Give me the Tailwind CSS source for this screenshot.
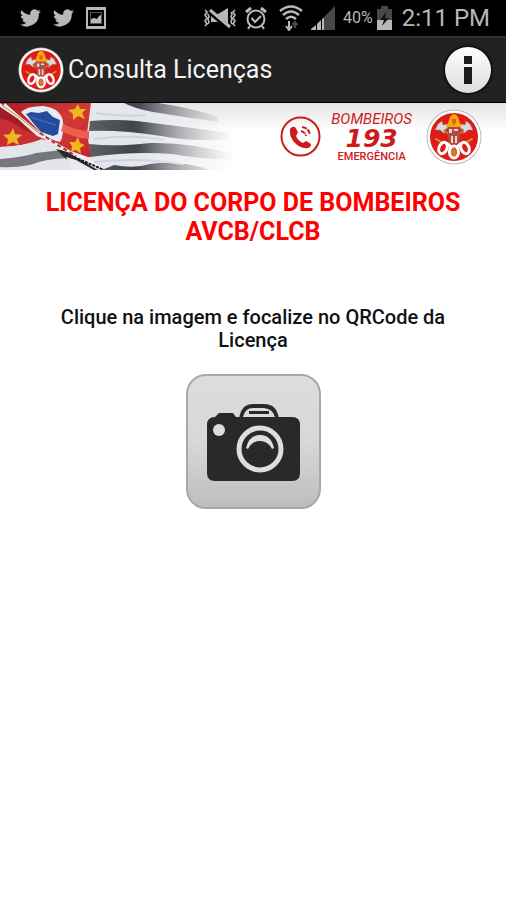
<!DOCTYPE html>
<html lang="pt-BR">
<head>
    <meta charset="UTF-8">
    <meta name="viewport" content="width=device-width, initial-scale=1.0">
    <title>Consulta Licenças</title>
    <script src="https://cdn.jsdelivr.net/npm/@tailwindcss/browser@4"></script>
</head>
<body class="min-h-screen bg-white font-['Roboto',sans-serif]">

    <!-- Símbolos reutilizados -->
    <svg class="hidden">
        <symbol id="passaro" viewBox="0 0 24 20">
            <path d="M24 2.400a10 10 0 0 1-2.800.8A5 5 0 0 0 23.300.5a10 10 0 0 1-3.100 1.200 4.900 4.900 0 0 0-8.400 4.500A14 14 0 0 1 1.700 1a4.900 4.900 0 0 0 1.500 6.600 4.900 4.900 0 0 1-2.200-.6 4.900 4.900 0 0 0 3.900 4.900 5 5 0 0 1-2.200.1 4.900 4.900 0 0 0 4.600 3.400A10 10 0 0 1 0 17.500 14 14 0 0 0 21.500 5 10 10 0 0 0 24 2.400z"/>
        </symbol>
        <symbol id="brasao" viewBox="0 0 56 56">
            <circle cx="28" cy="28" r="27.500" fill="#b9b9b9"/>
            <circle cx="28" cy="28" r="26.500" fill="#fff"/>
            <circle cx="28" cy="28" r="24" fill="#df1b16"/>
            <g stroke="#b07a2c" stroke-width="2" stroke-linecap="round">
                <path d="M16 19l20 18M40 19L20 37"/>
                <path d="M10 30l5 3 4 5M46 30l-5 3-4 5" fill="none" stroke="#c99a30"/>
            </g>
            <path d="M9 21l3-6 4-3 1 4 4-1 1 4-4 2 1 4-5-4z" fill="#dcdcdc" stroke="#8d8080" stroke-width=".6"/>
            <path d="M47 21l-3-6-4-3-1 4-4-1-1 4 4 2-1 4 5-4z" fill="#dcdcdc" stroke="#8d8080" stroke-width=".6"/>
            <path d="M24 8q4-6 8 0l2 6 2 4H20l2-4z" fill="#f5a90c"/>
            <path d="M26 10h4v4l-2 2-2-2z" fill="#dd6510"/>
            <path d="M22 18h12v10l-2 7h-8l-2-7z" fill="#b04a44"/>
            <path d="M23 20h3v4h-3zM28 20h4v2h-4zM25 27h2v7h-2zM29 27h2v7h-2z" fill="#edd5cf"/>
            <g fill="#df1b16" stroke="#fff" stroke-width="3">
                <ellipse cx="17" cy="39" rx="4" ry="6" transform="rotate(24 17 39)"/>
                <ellipse cx="39" cy="39" rx="4" ry="6" transform="rotate(-24 39 39)"/>
                <path d="M20 34l8 6 8-6" fill="none"/>
                <ellipse cx="28" cy="43" rx="4.500" ry="6"/>
            </g>
            <path d="M28 38l3 5-3 5-3-5z" fill="#c98220"/>
        </symbol>
    </svg>

    <!-- Barra de status -->
    <div class="flex h-9 items-center justify-between bg-black pr-4 pl-5 text-[#b8b8b8]">
        <div class="flex items-center gap-3">
            <svg class="h-[18px] w-[21px] fill-current"><use href="#passaro"/></svg>
            <svg class="h-[18px] w-[21px] fill-current"><use href="#passaro"/></svg>
            <svg class="h-[22px] w-5" viewBox="0 0 20 22" fill="currentColor">
                <path fill-rule="evenodd" d="M0 0h20v22H0zM2 3v16h16V3z"/>
                <path fill-rule="evenodd" d="M4 5h12v12H4zM5 6v10h10V6z" fill="#555"/>
                <path d="M5 16v-4l3-1 3 1 2-3 2-1v8z"/>
            </svg>
        </div>
        <div class="flex items-center">
            <!-- Vibrar / mudo -->
            <svg class="mr-2 h-[22px] w-[34px]" viewBox="0 0 34 22" fill="none" stroke="currentColor" stroke-width="1.600">
                <path d="M2 3l2 2-2 3 2 3-2 3 2 3-2 2M6 5l-1 2 1 3-1 2 1 3-1 2M32 3l-2 2 2 3-2 3 2 3-2 3 2 2M28 5l1 2-1 3 1 2-1 3 1 2"/>
                <path d="M8 7h7l10-6v19l-10-5H8z" fill="currentColor" stroke="none"/>
                <path d="M6 4l20 17" stroke="#000" stroke-width="5"/>
                <path d="M7 3l20 17" stroke-width="3"/>
            </svg>
            <!-- Alarme -->
            <svg class="mr-3 h-[24px] w-[22px]" viewBox="0 0 22 24" fill="none" stroke="currentColor" stroke-width="2">
                <circle cx="11" cy="13" r="8.500"/>
                <path d="M6.500 12l3.500 4 6-6M5 20l-2 3M17 20l2 3"/>
                <path d="M1 6l5-4M21 6l-5-4" stroke-width="3"/>
            </svg>
            <!-- Wi-Fi -->
            <svg class="mr-2 h-[26px] w-6" viewBox="0 0 24 26" fill="none" stroke="currentColor" stroke-width="2.400">
                <path d="M1 6q11-9 22 0M4 10q8-7 16 0M7 14q5-4.500 10 0"/>
                <path d="M10 16v7M7 21l3 4 3-4" stroke-width="2"/>
                <path d="M16 23v-5M13.500 20l2.500-3 2.500 3" stroke="#4a4a4a" stroke-width="2"/>
            </svg>
            <!-- Sinal -->
            <svg class="mr-2 h-[24px] w-6" viewBox="0 0 24 24" fill="currentColor">
                <path d="M24 0v24H12V12z" fill="#484848"/>
                <path d="M0 24v-1l5-4v5zM6 24v-6l4-4v10zM11 24V13l2-1v12z"/>
            </svg>
            <span class="mr-1 text-base">40%</span>
            <svg class="mr-[10px] h-[24px] w-[15px]" viewBox="0 0 15 24">
                <path d="M4 0h7v3h4v21H0V3h4z" fill="#484848"/>
                <path d="M0 14h15v10H0z" fill="currentColor"/>
                <path d="M9 6l-6 8h4l-2 6 7-8H8z" fill="#111"/>
            </svg>
            <time class="text-2xl leading-9">2:11 PM</time>
        </div>
    </div>

    <!-- Barra do aplicativo -->
    <header class="flex h-[67px] items-center border-t-2 border-b border-t-[#333] border-b-black bg-[#222] px-[15px]">
        <svg class="mr-1 ml-[3px] h-[46px] w-[46px]"><use href="#brasao"/></svg>
        <h1 class="grow text-[25px] text-[#f3f3f3]">Consulta Licenças</h1>
        <button type="button" aria-label="Informações" class="grid h-[46px] w-[46px] place-items-center rounded-full bg-linear-to-b from-white to-[#dcdcdc] shadow-[0_0_2px_2px_#111]">
            <svg class="h-[28px] w-2" viewBox="0 0 8 28" fill="#1c1c1c">
                <path d="M0 0h8v8H0zM0 11h8v17H0z"/>
            </svg>
        </button>
    </header>

    <!-- Banner -->
    <div class="flex h-[67px] items-center justify-between bg-linear-to-b from-[#e4e4e4] to-white to-40% pr-6">
        <svg class="h-[67px] w-[250px]" viewBox="0 0 250 67">
            <defs>
                <linearGradient id="sumir" x1="0" x2="1">
                    <stop offset=".56" stop-color="#fff"/>
                    <stop offset=".94" stop-color="#fff" stop-opacity="0"/>
                </linearGradient>
                <linearGradient id="vermelho" x1="0" x2="1" y2="1">
                    <stop offset="0" stop-color="#a81c28"/>
                    <stop offset=".5" stop-color="#d43a35"/>
                    <stop offset="1" stop-color="#c4252b"/>
                </linearGradient>
                <linearGradient id="faixa" gradientUnits="userSpaceOnUse" x1="86" x2="240" y1="0" y2="0">
                    <stop offset="0" stop-color="#5f6269"/>
                    <stop offset=".3" stop-color="#42444c"/>
                    <stop offset=".6" stop-color="#73757c"/>
                    <stop offset="1" stop-color="#a5a6a9"/>
                </linearGradient>
                <mask id="borda"><path d="M0 0h250v67H0z" fill="url(#sumir)"/></mask>
            </defs>
            <g mask="url(#borda)">
                <path d="M0 0h150q50 4 75 16l25 20v31H0z" fill="#e3e6eb"/>
                <g fill="url(#faixa)">
                    <path d="M124 0h34q34 5 60 14v5q-34-5-65-10-20-4-29-9z"/>
                    <path d="M90 18q25-2 47 0 40 5 93 12v6q-38 3-69-3-38-6-72-5z"/>
                    <path d="M89 41q26 3 61-1 40-1 87 12v5q-38-1-65-6-38-3-82 3z"/>
                    <path d="M102 67l12-5q20 4 36-1 30-4 60 6z"/>
                </g>
                <path d="M96 10q28 4 50 2M94 36q40-5 70 1M94 59q42-5 90 2" fill="none" stroke="#cfd3da" stroke-width="2"/>
                <!-- Parte vermelha -->
                <path d="M0 0h91l-4 30 4 24-16 0-18-12L18 13z" fill="url(#vermelho)"/>
                <path d="M0 4l18 12 19 17 10 4q-22 6-47 7z" fill="#c92f32"/>
                <path d="M0 4l18 12 14 14-8-3Q10 16 0 16z" fill="#a31d29"/>
                <!-- Faixas de baixo -->
                <path d="M0 44q25-1 42-8l18 8 42 23H0z" fill="#e3e5ea"/>
                <path d="M0 56q24-2 36-6l26-3 6 8q-24 1-38 7-16 3-30 2z" fill="#74777c"/>
                <path d="M56 46l12 3 30 18H82L66 56z" fill="#26282d"/>
                <path d="M66 54l10 3 18 10H72z" fill="#e8eaee"/>
                <!-- Círculo com o mapa -->
                <path d="M21 9q6-6 22-6 18 2 20 16 1 14-3 20-10-2-20-10z" fill="#e6eaf4"/>
                <path d="M63 21q14 7 26 7v8q-14-1-28-8z" fill="#ea6152"/>
                <path d="M26 11l5-2 8 1 8-2 6 6 7 3-2 14-5 2-12-4-7-8z" fill="#244c9b"/>
                <path d="M30 14l26 8" stroke="#4068b4" stroke-width="1.500"/>
                <!-- Borda dobrada -->
                <path d="M5 0q12 11 22 19l14 12 30 17 17 6 15 13h-5L66 48 37 32 20 17 3 3z" fill="#eef0f4"/>
                <path d="M2 2l18 13 20 16" fill="none" stroke="#c08a28" stroke-width="1"/>
                <path d="M40 30l16 11 20 12" fill="none" stroke="#b92833" stroke-width="2" stroke-dasharray="4 3"/>
                <path d="M74 54l30 13" fill="none" stroke="#18191c" stroke-width="2" stroke-dasharray="3 1"/>
                <!-- Estrelas -->
                <g fill="#f2b522">
                    <path d="M78 1l2 5 6 0-4 4 3 6-7-3-5 4 0-6-5-4 7-1z"/>
                    <path d="M13 25l2 6 7 1-5 4 2 6-6-3-6 3 1-6-5-4 7-1z"/>
                    <path d="M78 34l2 6 5 2-5 3 1 6-5-4-5 2 1-6-3-4 6 0z"/>
                </g>
            </g>
        </svg>
        <div class="flex items-center">
            <svg class="mr-[10px] h-[41px] w-[41px]" viewBox="0 0 41 41" fill="none" stroke="#cc1a1d" stroke-width="2">
                <circle cx="20.500" cy="20.500" r="19"/>
                <path d="M10 13q2-3 5-2l3 5-2 4q2 5 7 7l3-2 5 3q0 3-3 4-8 1-14-6-5-6-4-13z" fill="#cc1a1d" stroke="none"/>
                <path d="M21 15q4 1 5 5M22 11q7 1 8 8" stroke-width="2" stroke-dasharray="5 1"/>
            </svg>
            <div class="mr-[14px] flex flex-col items-center text-[#cc1a1d]">
                <span class="text-[15px] leading-4 italic">BOMBEIROS</span>
                <span class="font-['DejaVu_Sans',sans-serif] text-[25px] leading-6 font-bold italic">193</span>
                <span class="text-[11px] leading-3 font-medium">EMERGÊNCIA</span>
            </div>
            <svg class="h-14 w-14"><use href="#brasao"/></svg>
        </div>
    </div>

    <main class="flex flex-col items-center px-10 text-center">
        <h2 class="mt-[18px] text-[25px] leading-[29px] font-bold text-[#f00]">LICENÇA DO CORPO DE BOMBEIROS AVCB/CLCB</h2>
        <p id="instrucao" class="mt-[60px] px-4 text-[20px] leading-[23px] font-medium text-[#111]">Clique na imagem e focalize no QRCode da Licença</p>
        <button type="button" aria-label="Abrir câmera" aria-describedby="instrucao" class="mt-[22px] grid h-[135px] w-[135px] place-items-center rounded-[20px] border-2 border-[#a8a8a8] bg-linear-to-b from-[#dedcdc] via-[#d8d8d8] to-[#bdbdbd]">
            <svg class="h-[78px] w-[93px]" viewBox="0 0 93 78">
                <path d="M32 16q2-15 14-15h11q13 0 15 15z" fill="#292929"/>
                <path d="M36 14q2-9 10-9h11q9 1 11 9z" fill="#dcdcdc"/>
                <path d="M42 8h20v3H42z" fill="#292929"/>
                <path d="M8 14l4-4h14l3 4h56q8 0 8 8v48q0 8-8 8H8q-8 0-8-8V22q0-8 8-8z" fill="#292929"/>
                <circle cx="12" cy="27" r="6" fill="#dcdcdc"/>
                <circle cx="53" cy="46" r="21" fill="#292929" stroke="#dedede" stroke-width="5"/>
                <path d="M39 45q3-13 14-13t14 13l-2 1q-4-8-12-8t-12 8z" fill="#dedede"/>
            </svg>
        </button>
    </main>

</body>
</html>
